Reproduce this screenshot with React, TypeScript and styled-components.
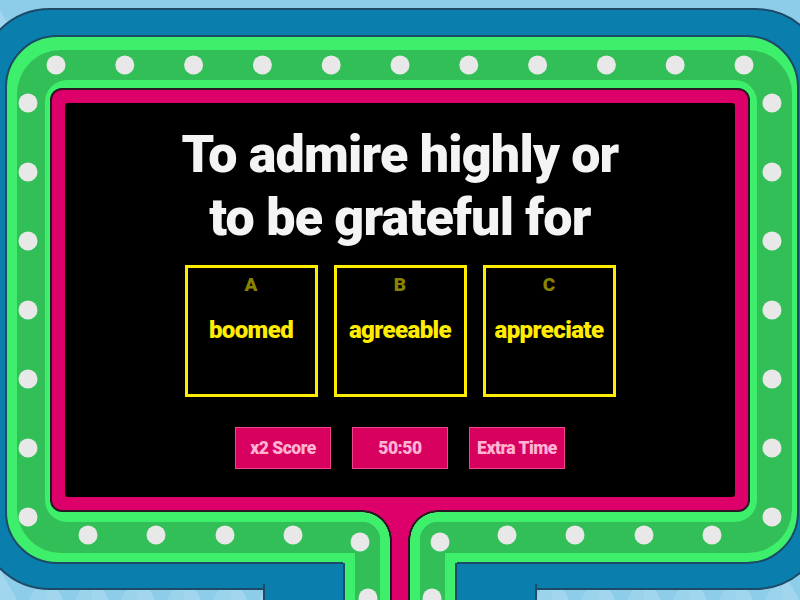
import React from 'react';
import styled, { createGlobalStyle } from 'styled-components';

const NAVY = '#1d4a66';
const BLUE = '#0a7fae';
const BRIGHT = '#3def6b';
const MID = '#33bf57';
const PINK = '#dd006b';
const RIM = '#2a1522';
const DOT = '#e8e8e8';
const FONT = 'Roboto, "DejaVu Sans", sans-serif';

const GlobalStyle = createGlobalStyle`
  html, body { margin: 0; padding: 0; }
  body { font-family: ${FONT}; }
`;

const Page = styled.div`
  position: relative;
  width: 800px;
  height: 600px;
  overflow: hidden;
  box-sizing: border-box;
  padding-top: 8px;
  background-color: #8dcdea;
  background-image:
    linear-gradient(60deg, rgba(255, 255, 255, 0.18) 25%, transparent 25%),
    linear-gradient(-60deg, rgba(255, 255, 255, 0.12) 25%, transparent 25%);
  background-size: 46px 40px;
`;

const BlueBox = styled.div`
  height: 582px;
  margin: 0 -27px 0 -22px;
  box-sizing: border-box;
  border: 2px solid ${NAVY};
  border-radius: 72px;
  background: ${BLUE};
  padding: 25px 26px 24px 25px;
  display: flex;
`;

const GreenBox = styled.div`
  flex: 1;
  display: flex;
  border: 2px solid ${NAVY};
  border-radius: 52px;
  background: ${BRIGHT};
  padding: 13px 5px 9px 10px;
`;

const MidBand = styled.div`
  flex: 1;
  display: flex;
  border-radius: 44px;
  background: ${MID};
  padding: 30px 35px 31px 28px;
`;

const InnerRim = styled.div`
  flex: 1;
  display: flex;
  border-radius: 22px;
  background: ${BRIGHT};
  padding: 8px 7px 10px 5px;
`;

const PinkFrame = styled.div`
  flex: 1;
  display: flex;
  border: 2px solid ${RIM};
  border-radius: 12px;
  background: ${PINK};
  padding: 13px;
`;

const Screen = styled.div`
  flex: 1;
  display: flex;
  flex-direction: column;
  align-items: center;
  background: #000;
  border-radius: 3px;
  padding-top: 20px;
`;

const Question = styled.h1`
  margin: 0;
  color: #f4f4f4;
  font-family: ${FONT};
  font-weight: 900;
  font-size: 52px;
  line-height: 63px;
  text-align: center;
  letter-spacing: -0.8px;
`;

const Answers = styled.div`
  display: flex;
  gap: 16px;
  margin-top: 16px;
`;

const AnswerBox = styled.div`
  width: 133px;
  height: 132px;
  box-sizing: border-box;
  border: 3px solid #ffec00;
  display: flex;
  flex-direction: column;
  align-items: center;
  padding-top: 6px;
`;

const Letter = styled.div`
  color: #898400;
  font-weight: 900;
  font-size: 19px;
  line-height: 22px;
`;

const Word = styled.div`
  margin-top: 20px;
  color: #ffec00;
  font-weight: 900;
  font-size: 24px;
  line-height: 28px;
  letter-spacing: -0.6px;
`;

const Boosts = styled.div`
  display: flex;
  gap: 21px;
  margin-top: 30px;
`;

const Boost = styled.div`
  width: 96px;
  height: 42px;
  box-sizing: border-box;
  border: 1px solid #f0478e;
  background: #d8005e;
  color: #ffb3d3;
  display: flex;
  align-items: center;
  justify-content: center;
  font-weight: 900;
  font-size: 17.5px;
  letter-spacing: -0.5px;
`;

/* stand under the screen: the frame splits around the pole */
const Stand = styled.div`
  position: absolute;
  left: 263px;
  top: 500px;
  width: 274px;
  height: 100px;
`;

const BlueStem = styled.div`
  position: absolute;
  left: 0;
  top: 84px;
  width: 274px;
  height: 16px;
  box-sizing: border-box;
  background: ${BLUE};
  border-left: 2px solid ${NAVY};
  border-right: 2px solid ${NAVY};
`;

const GreenStem = styled.div`
  position: absolute;
  left: 80px;
  top: 53px;
  width: 114px;
  height: 47px;
  box-sizing: border-box;
  padding: 0 12px;
  background: ${BRIGHT};
  display: flex;
  justify-content: space-between;

  &::before,
  &::after {
    content: '';
    position: absolute;
    top: 10px;
    bottom: 0;
    width: 2px;
    background: ${NAVY};
  }
  &::before { left: 0; }
  &::after { right: 0; }
`;

const MidStrip = styled.div`
  width: 25px;
  background: ${MID};
`;

const Neck = styled.div`
  position: absolute;
  left: 117px;
  top: 40px;
  width: 40px;
  height: 60px;
  box-sizing: border-box;
  padding: 0 10px;
  background: ${BRIGHT};
  display: flex;
`;

const PinkCore = styled.div`
  flex: 1;
  background: ${PINK};
  border-left: 2px solid ${RIM};
  border-right: 2px solid ${RIM};
`;

const PinkTop = styled.div`
  position: absolute;
  left: 129px;
  top: 5px;
  width: 16px;
  height: 36px;
  background: ${PINK};
`;

const Fillet = styled.div<{ $side: 'left' | 'right' }>`
  position: absolute;
  top: 10px;
  left: ${(p) => (p.$side === 'left' ? '99px' : '145px')};
  width: 30px;
  height: 30px;
  background: radial-gradient(
    circle at ${(p) => (p.$side === 'left' ? '0 100%' : '100% 100%')},
    transparent 18px,
    ${BRIGHT} 18.5px,
    ${BRIGHT} 27.5px,
    ${RIM} 28px,
    ${RIM} 29.5px,
    ${PINK} 30px
  );
`;

const Lights = styled.svg`
  position: absolute;
  left: 0;
  top: 0;
  pointer-events: none;
`;

const lightSpots: [number, number][] = [
  ...Array.from({ length: 11 }, (_, i) => [56 + i * 68.8, 65] as [number, number]),
  ...Array.from({ length: 7 }, (_, j) => [28, 103 + j * 69] as [number, number]),
  ...Array.from({ length: 7 }, (_, j) => [772, 103 + j * 69] as [number, number]),
  [88, 535], [156, 535], [225, 535], [293, 535],
  [507, 535], [575, 535], [644, 535], [712, 535],
  [360, 542], [440, 542], [368, 598], [432, 598],
];

const answers = [
  { letter: 'A', word: 'boomed' },
  { letter: 'B', word: 'agreeable' },
  { letter: 'C', word: 'appreciate' },
];

const boosts = ['x2 Score', '50:50', 'Extra Time'];

export default function App() {
  return (
    <Page>
      <GlobalStyle />
      <BlueBox>
        <GreenBox>
          <MidBand>
            <InnerRim>
              <PinkFrame>
                <Screen>
                  <Question>
                    To admire highly or
                    <br />
                    to be grateful for
                  </Question>
                  <Answers>
                    {answers.map((a) => (
                      <AnswerBox key={a.letter}>
                        <Letter>{a.letter}</Letter>
                        <Word>{a.word}</Word>
                      </AnswerBox>
                    ))}
                  </Answers>
                  <Boosts>
                    {boosts.map((b) => (
                      <Boost key={b}>{b}</Boost>
                    ))}
                  </Boosts>
                </Screen>
              </PinkFrame>
            </InnerRim>
          </MidBand>
        </GreenBox>
      </BlueBox>

      <Stand>
        <BlueStem />
        <GreenStem>
          <MidStrip />
          <MidStrip />
        </GreenStem>
        <PinkTop />
        <Fillet $side="left" />
        <Fillet $side="right" />
        <Neck>
          <PinkCore />
        </Neck>
      </Stand>

      <Lights width="800" height="600" viewBox="0 0 800 600">
        {lightSpots.map(([x, y], i) => (
          <circle key={i} cx={x} cy={y} r="9.5" fill={DOT} />
        ))}
      </Lights>
    </Page>
  );
}
